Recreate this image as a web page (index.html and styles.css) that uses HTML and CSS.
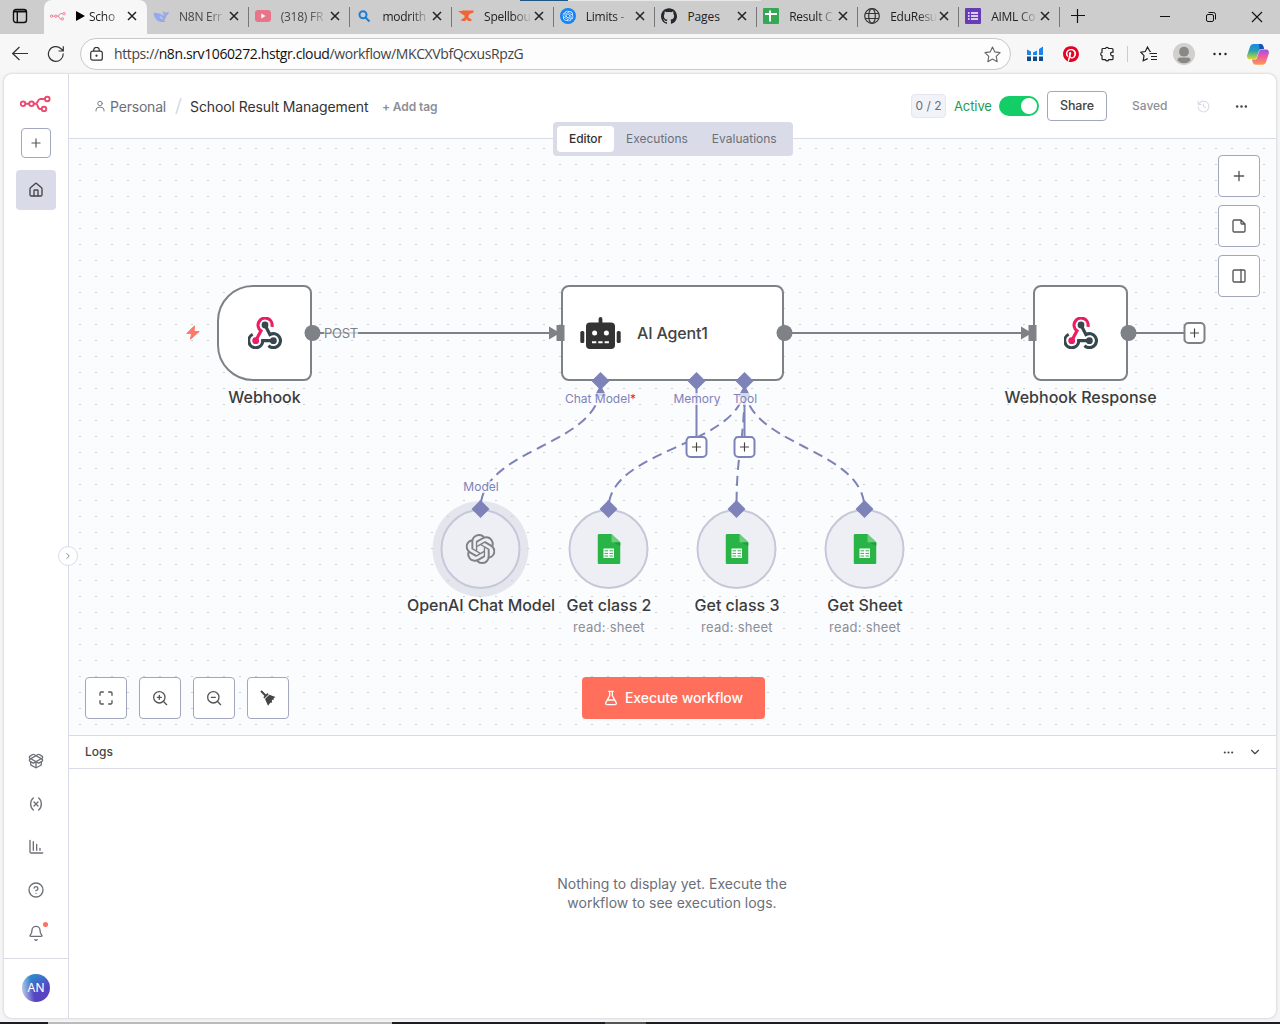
FILE: index.html
```html
<!DOCTYPE html>
<html lang="en">
<head>
<meta charset="utf-8">
<title>School Result Management</title>
<link rel="stylesheet" href="styles.css">
</head>
<body>
<svg width="0" height="0" class="defs" aria-hidden="true">
  <defs>
    <symbol id="n8n" viewBox="0 0 31 17"><g fill="none" stroke="currentColor" stroke-width="1.9"><circle cx="3" cy="8.8" r="2.3"/><circle cx="11.5" cy="8.8" r="2.3"/><circle cx="27.3" cy="4" r="2.3"/><circle cx="24" cy="14" r="2.3"/><path d="M5.3 8.8h3.9M13.8 8.8h2c2 0 1.400-4.700 4.400-4.800h4.800M15.800 8.800c2.500 0 1.600 5.200 4.200 5.200h1.700"/></g></symbol>
    <symbol id="close" viewBox="0 0 10 10"><path d="M1 1l8 8M9 1l-8 8" stroke="currentColor" stroke-width="1.500"/></symbol>
    <symbol id="openai" viewBox="0 0 24 24"><path fill="currentColor" d="M22.2819 9.8211a5.9847 5.9847 0 0 0-.5157-4.9108 6.0462 6.0462 0 0 0-6.5098-2.9A6.0651 6.0651 0 0 0 4.9807 4.1818a5.9847 5.9847 0 0 0-3.9977 2.9 6.0462 6.0462 0 0 0 .7427 7.0966 5.98 5.98 0 0 0 .511 4.9107 6.051 6.051 0 0 0 6.5146 2.9001A5.9847 5.9847 0 0 0 13.2599 24a6.0557 6.0557 0 0 0 5.7718-4.2058 5.9894 5.9894 0 0 0 3.9977-2.9001 6.0557 6.0557 0 0 0-.7475-7.0729zm-9.022 12.6081a4.4755 4.4755 0 0 1-2.8764-1.0408l.1419-.0804 4.7783-2.7582a.7948.7948 0 0 0 .3927-.6813v-6.7369l2.02 1.1686a.071.071 0 0 1 .038.052v5.5826a4.504 4.504 0 0 1-4.4945 4.4944zm-9.6607-4.1254a4.4708 4.4708 0 0 1-.5346-3.0137l.142.0852 4.783 2.7582a.7712.7712 0 0 0 .7806 0l5.8428-3.3685v2.3324a.0804.0804 0 0 1-.0332.0615L9.74 19.9502a4.4992 4.4992 0 0 1-6.1408-1.6464zM2.3408 7.8956a4.485 4.485 0 0 1 2.3655-1.9728V11.6a.7664.7664 0 0 0 .3879.6765l5.8144 3.3543-2.0201 1.1685a.0757.0757 0 0 1-.071 0l-4.8303-2.7865A4.504 4.504 0 0 1 2.3408 7.872zm16.5963 3.8558L13.1038 8.364 15.1192 7.2a.0757.0757 0 0 1 .071 0l4.8303 2.7913a4.4944 4.4944 0 0 1-.6765 8.1042v-5.6772a.79.79 0 0 0-.407-.667zm2.0107-3.0231l-.142-.0852-4.7735-2.7818a.7759.7759 0 0 0-.7854 0L9.409 9.2297V6.8974a.0662.0662 0 0 1 .0284-.0615l4.8303-2.7866a4.4992 4.4992 0 0 1 6.6802 4.66zM8.3065 12.863l-2.02-1.1638a.0804.0804 0 0 1-.038-.0567V6.0742a4.4992 4.4992 0 0 1 7.3757-3.4537l-.142.0805L8.704 5.459a.7948.7948 0 0 0-.3927.6813zm1.0976-2.3654l2.602-1.4998 2.6069 1.4998v2.9994l-2.5974 1.4997-2.6067-1.4997Z"/></symbol>
    <symbol id="webhook" viewBox="0 0 34 32"><g fill="none" stroke-width="3.200"><path stroke="#37474f" d="M4.700 17.400A7 7 0 1 0 14.700 23.700H25.400M17 8L21.900 17.600A7 7 0 1 1 20.500 28.600"/><path stroke="#e91e63" d="M23.900 9.800A7 7 0 1 0 13 13.800L7.700 23.700"/></g><circle cx="17" cy="8" r="3.400" fill="#37474f"/><circle cx="25.400" cy="23.700" r="3.400" fill="#37474f"/><circle cx="7.700" cy="23.700" r="3.400" fill="#e91e63"/></symbol>
    <symbol id="sheets" viewBox="0 0 23 30"><path fill="#28b446" d="M1.500 0H14l9 8.500v20a1.500 1.500 0 0 1-1.500 1.500h-20A1.500 1.500 0 0 1 0 28.500v-27A1.500 1.500 0 0 1 1.500 0z"/><path fill="#6ace7c" d="M14 0l9 8.500h-7.500A1.500 1.500 0 0 1 14 7z"/><path fill="#219b38" d="M16 8.500h7V12z"/><path fill="#fff" d="M6 14.500h10.500v9.500H6z"/><path stroke="#28b446" stroke-width="1" d="M7 16.800h3.600M12 16.800h3.600M7 19.400h3.600M12 19.400h3.600M7 22h3.600M12 22h3.600" /></symbol>
    <symbol id="plus" viewBox="0 0 24 24"><path d="M5 12h14M12 5v14"/></symbol>
    <symbol id="dots" viewBox="0 0 24 24"><g fill="currentColor" stroke="none"><circle cx="4" cy="12" r="2.300"/><circle cx="12" cy="12" r="2.300"/><circle cx="20" cy="12" r="2.300"/></g></symbol>
  </defs>
</svg>

<div class="browser">
  <div class="tabstrip">
    <div class="workspaces"><svg width="16" height="16" viewBox="0 0 16 16" fill="none" stroke="#111" stroke-width="1.400"><rect x="1.500" y="1.500" width="13" height="13" rx="2.500"/><path d="M1.500 3.500h13" stroke-width="2"/><path d="M5.300 4v10"/></svg></div>
    <div class="tab active"><svg class="fav faded" width="17" height="16"><use href="#n8n"/></svg><span class="name"><svg class="play" width="9" height="10" viewBox="0 0 9 10"><path d="M0 0l9 5-9 5z"/></svg>Scho</span><svg class="x"><use href="#close"/></svg></div>
    <div class="tab"><svg class="fav" viewBox="0 0 16 16"><path fill="#98a8ee" d="M1 4.500c2 .8 3.500.5 5.500 1 1.800.5 3 2 4.300 2.300C10.500 6 9.300 4 10 2.500c.6 1.800 1.500 2.200 3 2.200 1.200 0 1.800-.8 2.800-1.200-.1 2-1 3.700-2.600 4.300-.1 2.200-1 3.500-2.200 4.500l1.600 1.200c-3 1-6.500.8-8.800-1.500C1.500 10 .3 7 1 4.500z"/><path fill="#cdcdcd" d="M6.500 8c1.700.4 3 1.800 3.600 3.300-1.900-.2-3.200-1.400-3.600-3.300z"/></svg><span class="name dim">N8N Err</span><svg class="x"><use href="#close"/></svg></div>
    <div class="tab"><svg class="fav" viewBox="0 0 16 16"><rect y="2" width="16" height="12" rx="3" fill="#e8748a"/><path fill="#fff" d="M6.300 5.500l4.200 2.500-4.200 2.500z"/></svg><span class="name dim">(318) FR</span><svg class="x"><use href="#close"/></svg></div>
    <div class="tab"><svg class="fav" viewBox="0 0 16 16" fill="none" stroke="#1a7fd4" stroke-width="2"><circle cx="7" cy="6.700" r="3.500"/><path d="M9.500 9.500l4 4"/></svg><span class="name">modrith</span><svg class="x"><use href="#close"/></svg></div>
    <div class="tab"><svg class="fav" viewBox="0 0 16 16"><path fill="#f16436" d="M0 3h4v-.5h11.500v2l-4 1.500-1 2v1.500l3 2V13H9.800v-1.200H7.500V13H3.500v-1.500L6.500 9.500V7.500L4 6z"/></svg><span class="name">Spellbou</span><svg class="x"><use href="#close"/></svg></div>
    <div class="tab"><svg class="fav" viewBox="0 0 16 16"><circle cx="8" cy="8" r="8" fill="#1682f3"/><svg class="limits-mark" x="2.500" y="2.500" width="11" height="11" viewBox="0 0 24 24"><use href="#openai"/></svg></svg><span class="name">Limits -</span><svg class="x"><use href="#close"/></svg></div>
    <div class="tab"><svg class="fav" viewBox="0 0 24 24"><path fill="#24292f" d="M12 .297c-6.63 0-12 5.373-12 12 0 5.303 3.438 9.8 8.205 11.385.6.113.82-.258.82-.577 0-.285-.01-1.04-.015-2.04-3.338.724-4.042-1.61-4.042-1.61C4.422 18.07 3.633 17.7 3.633 17.7c-1.087-.744.084-.729.084-.729 1.205.084 1.838 1.236 1.838 1.236 1.07 1.835 2.809 1.305 3.495.998.108-.776.417-1.305.76-1.605-2.665-.3-5.466-1.332-5.466-5.93 0-1.31.465-2.38 1.235-3.22-.135-.303-.54-1.523.105-3.176 0 0 1.005-.322 3.3 1.23.96-.267 1.98-.399 3-.405 1.02.006 2.04.138 3 .405 2.28-1.552 3.285-1.23 3.285-1.23.645 1.653.24 2.873.12 3.176.765.84 1.23 1.91 1.23 3.22 0 4.61-2.805 5.625-5.475 5.92.42.36.81 1.096.81 2.22 0 1.606-.015 2.896-.015 3.286 0 .315.21.69.825.57C20.565 22.092 24 17.592 24 12.297c0-6.627-5.373-12-12-12"/></svg><span class="name full">Pages</span><svg class="x"><use href="#close"/></svg></div>
    <div class="tab"><svg class="fav" viewBox="0 0 16 16"><rect width="16" height="16" rx="1" fill="#34a853"/><path stroke="#fff" stroke-width="2" d="M2 6h12M7 2.500v11"/></svg><span class="name">Result C</span><svg class="x"><use href="#close"/></svg></div>
    <div class="tab"><svg class="fav" viewBox="0 0 16 16" fill="none" stroke="#333" stroke-width="1.200"><circle cx="8" cy="8" r="7.300"/><ellipse cx="8" cy="8" rx="3.300" ry="7.300"/><path d="M1.200 5.500h13.600M1.200 10.500h13.600"/></svg><span class="name">EduResu</span><svg class="x"><use href="#close"/></svg></div>
    <div class="tab"><svg class="fav" viewBox="0 0 16 16"><rect width="16" height="16" rx="1" fill="#673ab7"/><path stroke="#fff" stroke-width="1.600" d="M3 5h1.600M3 8h1.600M3 11h1.600M6 5h7M6 8h7M6 11h7"/></svg><span class="name">AIML Co</span><svg class="x"><use href="#close"/></svg></div>
    <svg class="newtab" width="14" height="14" viewBox="0 0 14 14" stroke="#111" stroke-width="1.200"><path d="M0 6.500h14M6.500 0v14"/></svg>
    <div class="window-buttons">
      <svg width="46" height="34" viewBox="0 0 46 34" fill="none" stroke="#111"><path d="M18 16.500h10"/></svg>
      <svg width="46" height="34" viewBox="0 0 46 34" fill="none" stroke="#111"><rect x="18.500" y="14.500" width="7" height="7" rx="1.500"/><path d="M20.500 12.500h5a2 2 0 0 1 2 2v5"/></svg>
      <svg width="46" height="34" viewBox="0 0 46 34" fill="none" stroke="#111" stroke-width="1.100"><path d="M18 12l10 10M28 12L18 22"/></svg>
    </div>
  </div>

  <div class="toolbar">
    <div class="nav">
      <svg width="16" height="16" viewBox="0 0 16 16" fill="none" stroke="#333" stroke-width="1.200"><path d="M16 7.500H.8M7.500 1L.7 7.500 7.500 14"/></svg>
      <svg width="18" height="18" viewBox="0 0 18 18" fill="none" stroke="#333" stroke-width="1.200"><path d="M16.200 8.500A7.400 7.400 0 1 1 14 3.700l2 2M16.300 1.200v4.800h-4.800"/></svg>
    </div>
    <div class="omnibox">
      <svg width="13" height="15" viewBox="0 0 13 15" fill="none" stroke="#333" stroke-width="1.200"><rect x=".7" y="4.200" width="11.600" height="9" rx="2"/><path d="M3.700 4V3.100a2.800 2.800 0 0 1 5.600 0V4"/><circle cx="6.500" cy="8.700" r=".5" fill="#333"/></svg>
      <span class="url">https://<b>n8n.srv1060272.hstgr.cloud</b>/workflow/MKCXVbfQcxusRpzG</span>
      <svg width="17" height="17" viewBox="0 0 17 17" fill="none" stroke="#666" stroke-width="1.100"><path d="M8.500 1l2.300 4.900 5.300.7-3.900 3.700 1 5.400-4.700-2.600-4.700 2.600 1-5.400L.9 6.600l5.300-.7z" stroke-linejoin="round"/></svg>
    </div>
    <div class="tools">
      <span><svg width="16" height="16" viewBox="0 0 16 16"><path fill="#1a84f0" d="M0 3.500l4 2V9H0zM6 6.500l4-2V9H6zM12 3l4-2.500V9h-4z"/><path fill="#124b84" d="M0 10.500h4V15H0zM6 10.500h4V15H6zM12 10.500h4V15h-4z"/></svg></span>
      <span><svg width="16" height="16" viewBox="0 0 24 24"><circle cx="12" cy="12" r="11" fill="#fff"/><path fill="#e60023" d="M12.017 0C5.396 0 .029 5.367.029 11.987c0 5.079 3.158 9.417 7.618 11.162-.105-.949-.199-2.403.041-3.439.219-.937 1.406-5.957 1.406-5.957s-.359-.72-.359-1.781c0-1.663.967-2.911 2.168-2.911 1.024 0 1.518.769 1.518 1.688 0 1.029-.653 2.567-.992 3.992-.285 1.193.6 2.165 1.775 2.165 2.128 0 3.768-2.245 3.768-5.487 0-2.861-2.063-4.869-5.008-4.869-3.41 0-5.409 2.562-5.409 5.199 0 1.033.394 2.143.889 2.741.099.12.112.225.085.345-.09.375-.293 1.199-.334 1.363-.053.225-.172.271-.401.165-1.495-.69-2.433-2.878-2.433-4.646 0-3.776 2.748-7.252 7.92-7.252 4.158 0 7.392 2.967 7.392 6.923 0 4.135-2.607 7.462-6.233 7.462-1.214 0-2.354-.629-2.758-1.379l-.749 2.848c-.269 1.045-1.004 2.352-1.498 3.146 1.123.345 2.306.535 3.55.535 6.607 0 11.985-5.365 11.985-11.987C23.97 5.39 18.592.026 11.985.026L12.017 0z"/></svg></span>
      <span><svg width="16" height="16" viewBox="0 0 16 16" fill="none" stroke="#222" stroke-width="1.200"><path d="M4 2.500h2.400a1.700 1.700 0 0 1 3.200 0H13a1 1 0 0 1 1 1V6.200c-3.200-.8-3.200 4.300 0 3.500v3a1 1 0 0 1-1 1H9.800a1.800 1.800 0 0 1-3.400 0H4a1 1 0 0 1-1-1V9.800a1.900 1.900 0 0 1 0-3.600V3.500a1 1 0 0 1 1-1z"/></svg></span>
      <i></i>
      <span><svg width="17" height="17" viewBox="0 0 17 17" fill="none" stroke="#222" stroke-width="1.200"><path d="M11 5.500l-1.200-.2L7.500 1 5.300 5.500.8 6.200 4 9.600l-.8 5.200 4.500-2.200M9.500 7.500H17M11 10.500h6M11 13.500h6"/></svg></span>
      <span><svg width="22" height="22" viewBox="0 0 22 22"><circle cx="11" cy="11" r="11" fill="#d2d0ce"/><circle cx="11" cy="8.700" r="4.900" fill="#8a8886"/><path fill="#8a8886" d="M4.500 17.500q0-3 3-3h7q3 0 3 3a9 9 0 0 1-13 0z"/></svg></span>
      <span><svg width="14" height="16" viewBox="0 0 14 16"><g fill="#222"><circle cx="1.500" cy="8" r="1.200"/><circle cx="7" cy="8" r="1.200"/><circle cx="12.500" cy="8" r="1.200"/></g></svg></span>
      <span class="copilot"><svg width="22" height="21" viewBox="0 0 22 21"><defs><linearGradient id="c1" x2="0" y2="1"><stop stop-color="#1a8be8"/><stop offset=".45" stop-color="#2aa0b0"/><stop offset="1" stop-color="#d8dc2c"/></linearGradient><linearGradient id="c2" x2="0" y2="1"><stop stop-color="#a050e8"/><stop offset=".5" stop-color="#f0609a"/><stop offset="1" stop-color="#ff9a4a"/></linearGradient></defs><path fill="url(#c1)" d="M6.500 0h7a3 3 0 0 1 2.800 2.200L17 5h-2.500c-1.500 0-2.300.8-2.700 2.200L10 13c-.5 1.500-1.300 2.200-3 2.200H2.500C.5 15.200-.3 13 .2 11L3 2.800C3.600 1 4.800 0 6.500 0z"/><path fill="url(#c2)" d="M15 5.500h4.500c2 0 2.800 2.200 2.300 4L19 18c-.6 1.800-1.800 2.700-3.500 2.700h-7a3 3 0 0 1-2.800-2.200L5 15.600h2.500c1.500 0 2.300-.8 2.700-2.200L12 7.700c.5-1.500 1.300-2.200 3-2.200z"/><path fill="#1454b8" d="M12 0h1.500a3 3 0 0 1 2.800 2.200L17 5h-2.500c-1 0-1.500.2-2 .8z"/></svg></span>
    </div>
  </div>
</div>

<div class="app">
  <aside class="sidebar">
    <svg class="logo" width="31" height="17"><use href="#n8n"/></svg>
    <button class="add"><svg class="ic" width="14" height="14"><use href="#plus"/></svg></button>
    <div class="home"><svg class="ic" width="16" height="16" viewBox="0 0 24 24"><path d="M15 21v-8a1 1 0 0 0-1-1h-4a1 1 0 0 0-1 1v8"/><path d="M3 10a2 2 0 0 1 .709-1.528l7-6a2 2 0 0 1 2.582 0l7 6A2 2 0 0 1 21 10v9a2 2 0 0 1-2 2H5a2 2 0 0 1-2-2z"/></svg></div>
    <nav class="links">
      <svg class="ic" width="16" height="16" viewBox="0 0 24 24"><path d="M12 22v-9M15.170 2.210a1.670 1.670 0 0 1 1.630 0L21 4.570a1.930 1.930 0 0 1 0 3.360L8.820 14.790a1.655 1.655 0 0 1-1.640 0L3 12.430a1.930 1.930 0 0 1 0-3.360z"/><path d="M20 13v3.870a2.060 2.060 0 0 1-1.110 1.830l-6 3.080a1.930 1.930 0 0 1-1.780 0l-6-3.080A2.060 2.060 0 0 1 4 16.870V13"/><path d="M21 12.430a1.930 1.930 0 0 0 0-3.360L8.830 2.200a1.640 1.640 0 0 0-1.630 0L3 4.570a1.930 1.930 0 0 0 0 3.360l12.180 6.860a1.636 1.636 0 0 0 1.630 0z"/></svg>
      <svg class="ic" width="16" height="16" viewBox="0 0 24 24"><path d="M8 21s-4-3-4-9 4-9 4-9M16 3s4 3 4 9-4 9-4 9M15 9l-6 6M9 9l6 6"/></svg>
      <svg class="ic" width="16" height="16" viewBox="0 0 24 24"><path d="M3 2v17a2 2 0 0 0 2 2h17M8 17V4M13 17V8M18 17v-3"/></svg>
      <svg class="ic" width="16" height="16" viewBox="0 0 24 24"><circle cx="12" cy="12" r="10.500"/><path d="M9.090 9a3 3 0 0 1 5.830 1c0 2-3 3-3 3M12 17h.01"/></svg>
      <div class="bell"><svg class="ic" width="16" height="16" viewBox="0 0 24 24"><path d="M10.268 22a2 2 0 0 0 3.464 0M3.262 15.326A1 1 0 0 0 4 17h16a1 1 0 0 0 .740-1.673C19.410 13.956 18 12.499 18 8A6 6 0 0 0 6 8c0 4.499-1.411 5.956-2.738 7.326"/></svg></div>
    </nav>
    <div class="user"><span class="avatar">AN</span></div>
    <div class="expand"><svg class="ic" width="10" height="10" viewBox="0 0 24 24"><path d="M9 18l6-6-6-6"/></svg></div>
  </aside>

  <main class="main">
    <header class="header">
      <svg class="ic person" width="12" height="12" viewBox="0 0 24 24"><circle cx="12" cy="7" r="4.500"/><path d="M4 22v-2a6 6 0 0 1 6-5.500h4a6 6 0 0 1 6 5.500v2"/></svg>
      <span class="project">Personal</span>
      <svg class="slash" width="7" height="18" viewBox="0 0 7 18"><path d="M6 1L1 17" stroke="#d9dce8" stroke-width="1.700"/></svg>
      <span class="title">School Result Management</span>
      <span class="addtag">+ Add tag</span>
      <span class="chip">0 / 2</span>
      <span class="status">Active</span>
      <span class="toggle"></span>
      <button class="share">Share</button>
      <span class="saved">Saved</span>
      <svg class="ic history" width="13" height="13" viewBox="0 0 24 24"><path d="M2 12a10 10 0 1 0 10-10 10 10 0 0 0-7.500 3.500L2 8M2 2v6h6M12 7v5l4 2"/></svg>
      <svg class="more" width="13" height="13"><use href="#dots"/></svg>
      <div class="switch"><span class="on">Editor</span><span>Executions</span><span>Evaluations</span></div>
    </header>

    <section class="canvas">
      <svg class="edges" viewBox="69 139 1207 596">
        <defs><pattern id="grid" x="79" y="148" width="16" height="16" patternUnits="userSpaceOnUse"><rect width="2" height="1" fill="#cfd0d4"/></pattern></defs>
        <rect x="69" y="139" width="1207" height="596" fill="url(#grid)"/>
        <g stroke="#7e8186" stroke-width="2"><path d="M312 333H550M785 333h238M1128 333h56"/></g>
        <g class="dash"><path d="M480.500 509C480.500 447 600.500 447 600.500 385"/><path d="M608.500 509C608.500 447 744.500 447 744.500 385"/><path d="M736.500 509C736.500 447 744.500 447 744.500 385"/><path d="M864.500 509C864.500 447 744.500 447 744.500 385"/></g>
        <path d="M696.500 381v55M744.500 381v55" stroke="#7d82b8" stroke-width="2"/>
        <g fill="#7e8186"><path d="M549 326.500l11 6.500-11 6.500zM1021 326.500l11 6.500-11 6.500z"/></g>
        <g fill="#7d82b8"><path d="M594.500 396l6-11 6 11zM738 397l6.500-12 6.500 12z"/></g>
      </svg>

      <div class="viewport">
        <svg class="bolt" width="14" height="15" viewBox="0 0 14 15"><path fill="#ff7a66" stroke="#ff7a66" stroke-linejoin="round" d="M8.500.8L.8 8.500h4.700L4.500 14.200l8.700-7.700H8z"/></svg>
        <div class="node trigger"><svg width="34" height="32"><use href="#webhook"/></svg></div>
        <div class="node agent">
          <svg width="41" height="32" viewBox="0 0 41 32"><g fill="#333"><rect x="18.600" width="3.800" height="8" rx="1.900"/><rect x="6" y="5.500" width="29" height="26.500" rx="4"/><rect x=".3" y="14" width="4" height="12" rx="1.500"/><rect x="36.700" y="14" width="4" height="12" rx="1.500"/></g><g fill="#fff"><circle cx="14.600" cy="16" r="2.500"/><circle cx="26.400" cy="16" r="2.500"/><path d="M12 24.200h4.300v2H12zM18.300 24.200h4.300v2h-4.300zM24.600 24.200h4.300v2h-4.300z"/></g></svg>
          <span>AI Agent1</span>
        </div>
        <div class="node response"><svg width="34" height="32"><use href="#webhook"/></svg></div>
        <div class="disc d1 selected"><svg width="30" height="30"><use href="#openai"/></svg></div>
        <div class="disc d2"><svg width="23" height="30"><use href="#sheets"/></svg></div>
        <div class="disc d3"><svg width="23" height="30"><use href="#sheets"/></svg></div>
        <div class="disc d4"><svg width="23" height="30"><use href="#sheets"/></svg></div>

        <span class="label l-webhook">Webhook</span>
        <span class="label l-response">Webhook Response</span>
        <span class="label l-openai">OpenAI Chat Model</span>
        <span class="label l-c2">Get class 2<small>read: sheet</small></span>
        <span class="label l-c3">Get class 3<small>read: sheet</small></span>
        <span class="label l-sheet">Get Sheet<small>read: sheet</small></span>

        <span class="port p-post">POST</span>
        <span class="port p-chat">Chat Model<em>*</em></span>
        <span class="port p-memory">Memory</span>
        <span class="port p-tool">Tool</span>
        <span class="port p-model">Model</span>

        <div class="plus plus-out"><svg width="14" height="14" class="ic"><use href="#plus"/></svg></div>
        <div class="plus plus-memory"><svg width="14" height="14" class="ic"><use href="#plus"/></svg></div>
        <div class="plus plus-tool"><svg width="14" height="14" class="ic"><use href="#plus"/></svg></div>
      </div>

      <svg class="handles" viewBox="69 139 1207 596">
        <g fill="#7e8186"><circle cx="312.500" cy="333" r="8"/><circle cx="784.500" cy="333" r="8"/><circle cx="1128.500" cy="333" r="8"/><path d="M556.500 325h8v16h-8zM1028.500 325h8v16h-8z"/></g>
        <g fill="#7d82b8"><path d="M600.500 372l9 9-9 9-9-9zM696.500 372l9 9-9 9-9-9zM744.500 372l9 9-9 9-9-9zM480.500 500l9 9-9 9-9-9zM608.500 500l9 9-9 9-9-9zM736.500 500l9 9-9 9-9-9zM864.500 500l9 9-9 9-9-9z"/></g>
      </svg>

      <div class="side-tools">
        <button class="sq"><svg class="ic" width="16" height="16"><use href="#plus"/></svg></button>
        <button class="sq"><svg class="ic" width="16" height="16" viewBox="0 0 24 24"><path d="M15 3H5a2 2 0 0 0-2 2v14a2 2 0 0 0 2 2h14a2 2 0 0 0 2-2V9zM15 3v5a1 1 0 0 0 1 1h5"/></svg></button>
        <button class="sq"><svg class="ic" width="16" height="16" viewBox="0 0 24 24"><rect x="3" y="3" width="18" height="18" rx="2"/><path d="M15 3v18"/></svg></button>
      </div>

      <div class="bottom-tools">
        <button class="sq"><svg class="ic" width="16" height="16" viewBox="0 0 24 24"><path d="M8 3H5a2 2 0 0 0-2 2v3M21 8V5a2 2 0 0 0-2-2h-3M3 16v3a2 2 0 0 0 2 2h3M16 21h3a2 2 0 0 0 2-2v-3"/></svg></button>
        <button class="sq"><svg class="ic" width="16" height="16" viewBox="0 0 24 24"><circle cx="11" cy="11" r="8.500"/><path d="M22 22l-5-5M11 8v6M8 11h6"/></svg></button>
        <button class="sq"><svg class="ic" width="16" height="16" viewBox="0 0 24 24"><circle cx="11" cy="11" r="8.500"/><path d="M22 22l-5-5M8 11h6"/></svg></button>
        <button class="sq"><svg width="16" height="16" viewBox="0 0 16 16"><path d="M1 1l5 5" stroke="#444" stroke-width="2"/><path fill="#444" d="M3.300 7.300L7.500 3l1.200 1.200-4.200 4.200zM5 9l4.300-4.300 6.200 2.200-2 1.300.5 1.300-2.200.5.300 2.500-1.800.2L8 15.800z"/></svg></button>
      </div>
      <button class="execute"><svg class="ic" width="16" height="16" viewBox="0 0 24 24"><path d="M14 2v6a2 2 0 0 0 .245.960l5.510 10.080A2 2 0 0 1 18 22H6a2 2 0 0 1-1.755-2.960l5.510-10.080A2 2 0 0 0 10 8V2M6.453 15h11.094M8.500 2h7"/></svg><span>Execute workflow</span></button>
    </section>

    <section class="logs">
      <div class="logs-head"><span>Logs</span><svg class="more" width="11" height="11"><use href="#dots"/></svg><svg class="ic" width="14" height="14" viewBox="0 0 24 24"><path d="M6 9l6 6 6-6"/></svg></div>
      <p>Nothing to display yet. Execute the<br>workflow to see execution logs.</p>
    </section>
  </main>
</div>
<div class="taskbar"></div>
</body>
</html>
```
FILE: styles.css
```css
* { box-sizing: border-box; }
body { margin: 0; width: 1280px; height: 1024px; overflow: hidden; display: flex; flex-direction: column; background: #f5f5f5; font-family: Inter, sans-serif; color: #444; }
.defs { position: absolute; }
svg { display: block; flex: none; }
button { font: inherit; padding: 0; margin: 0; display: flex; align-items: center; justify-content: center; }
.ic { fill: none; stroke: currentColor; stroke-width: 2; stroke-linecap: round; stroke-linejoin: round; }

/* browser chrome */
.browser { font-family: "Open Sans", sans-serif; }
.tabstrip { height: 34px; display: flex; background: linear-gradient(90deg, transparent 520px, #1f5582 520px 568px, #e8e8e8 568px 761px, transparent 761px) top / 100% 1px no-repeat #cdcdcd; }
.workspaces { width: 44px; padding: 8px 0 0 12px; background: #cdcdcd; }
.tab { flex: none; width: 101px; height: 34px; display: flex; align-items: center; padding: 0 10px 2px 6px; position: relative; font-size: 12px; color: #222; }
.tab:nth-child(-n+8) { width: 101.700px; }
.tab.active { width: 103px; background: #f7f7f7; border-radius: 8px 8px 0 0; }
.tab:not(.active)::after { content: ""; position: absolute; right: 0; top: 7px; height: 20px; width: 1px; background: #777; }
.fav { width: 16px; height: 16px; }
.faded { opacity: .8; color: #ee5b7a; }
.limits-mark { color: #fff; }
.name { flex: 1; display: flex; align-items: center; gap: 4px; margin: 0 2px 0 10px; white-space: nowrap; letter-spacing: -.25px; -webkit-mask-image: linear-gradient(90deg, #000 60%, transparent 100%); mask-image: linear-gradient(90deg, #000 60%, transparent 100%); }
.name.full { -webkit-mask-image: none; mask-image: none; letter-spacing: -.1px; }
.name.dim { opacity: .8; }
.x { width: 10px; height: 10px; color: #222; }
.newtab { margin: 9px 0 0 11px; }
.window-buttons { display: flex; margin-left: auto; }
.toolbar { height: 40px; display: flex; align-items: center; background: #f7f7f7; }
.nav { width: 80px; padding-left: 12px; display: flex; align-items: center; gap: 19px; }
.omnibox { width: 931px; height: 32px; border: 1px solid #c8c8c8; border-radius: 16px; background: #fdfdfd; display: flex; align-items: center; padding: 0 9px; }
.url { flex: 1; margin-left: 11px; padding-bottom: 1px; font-size: 14px; letter-spacing: -.39px; color: #444; }
.url b { font-weight: 400; color: #111; }
.tools { display: flex; align-items: center; margin-left: 6px; }
.tools span { width: 36px; display: flex; justify-content: center; }
.tools i { width: 1px; height: 16px; background: #ccc; margin: 0 2px; }
.tools .copilot { width: 40px; }

/* app shell */
.app { height: 944px; margin: 0 4px; display: flex; background: #fff; border-radius: 8px; box-shadow: 0 0 3px rgba(0, 0, 0, .22); }
.sidebar { width: 65px; border-right: 1px solid #d9dce8; display: flex; flex-direction: column; align-items: center; position: relative; color: #6c6f78; }
.logo { color: #ea4b71; margin: 21px 2px 0 0; }
.add { width: 30px; height: 30px; margin-top: 16px; background: #fff; border: 1px solid #a2a7bb; border-radius: 4px; color: #555; }
.home { width: 40px; height: 40px; margin-top: 12px; border-radius: 4px; background: #d9dce8; color: #444; display: flex; align-items: center; justify-content: center; }
.links { margin-top: auto; display: flex; flex-direction: column; gap: 27px; }
.bell { position: relative; }
.bell::after { content: ""; position: absolute; left: 15px; top: -3px; width: 5px; height: 5px; border-radius: 50%; background: #ff6f5c; }
.user { width: 100%; height: 60px; margin-top: 17px; padding-bottom: 2px; border-top: 1px solid #d9dce8; display: flex; align-items: center; justify-content: center; }
.avatar { width: 28px; height: 28px; border-radius: 50%; background: linear-gradient(80deg, #c7d3ea 2%, transparent 40%), linear-gradient(150deg, #2f86cc 20%, #5547c4 60%, #5b3fbc); color: #fff; font-size: 12px; display: flex; align-items: center; justify-content: center; }
.expand { position: absolute; left: 54px; top: 472px; width: 20px; height: 20px; border-radius: 50%; border: 1px solid #d9dce8; background: #fff; display: flex; align-items: center; justify-content: center; z-index: 3; }
.main { flex: 1; min-width: 0; display: flex; flex-direction: column; }

.header { height: 65px; border-bottom: 1px solid #d9dce8; display: flex; align-items: center; padding: 0 28px 0 25px; position: relative; }
.person { color: #7e8186; }
.project { font-size: 14px; letter-spacing: -.2px; color: #6c6f78; margin-left: 4px; }
.slash { margin: 0 8px 0 9px; }
.title { font-size: 14px; letter-spacing: -.1px; color: #333; }
.addtag { font-size: 12px; font-weight: 600; letter-spacing: -.08px; color: #8d8f96; margin-left: 13.500px; }
.chip { margin-left: auto; width: 35px; height: 24px; padding-bottom: 1px; border: 1px solid #e4e6f0; background: #f2f3f8; border-radius: 4px; font-size: 12px; display: flex; align-items: center; justify-content: center; color: #6c6f78; }
.status { width: 37px; margin-left: 8px; font-size: 13px; letter-spacing: -.1px; color: #1e9a55; }
.toggle { width: 40px; height: 20px; margin-left: 8px; border-radius: 10px; background: radial-gradient(circle at 30px 10px, #fff 7.500px, transparent 8.500px), #13ce66; }
.share { width: 60px; height: 30px; margin-left: 8px; padding-bottom: 1px; background: #fff; border: 1px solid #a2a7bb; border-radius: 4px; font-size: 12.500px; font-weight: 500; letter-spacing: -.1px; color: #444; }
.saved { margin-left: 25px; padding-bottom: 1px; font-size: 12px; font-weight: 500; color: #8d8f96; width: 37px; }
.history { color: #d9dce8; margin-left: 28px; }
.more { color: #444; margin-left: 25px; }
.switch { position: absolute; left: 484px; top: 48px; height: 34px; width: 240px; padding: 4px; display: flex; background: #d9dce8; border-radius: 4px; z-index: 2; font-size: 12px; color: #6c6f78; }
.switch span { padding: 0 12px 2px; display: flex; align-items: center; border-radius: 4px; }
.switch .on { background: #fff; color: #333; font-weight: 500; letter-spacing: -.1px; }

/* workflow canvas */
.canvas { height: 596px; position: relative; background: #fbfcfe; overflow: hidden; }
.edges, .handles { position: absolute; inset: 0; width: 1207px; height: 596px; }
.dash path { fill: none; stroke: #7d82b8; stroke-width: 2; stroke-linecap: square; stroke-dasharray: 8 8; stroke-dashoffset: 8; }
.viewport { position: absolute; left: -69px; top: -139px; width: 1280px; height: 1024px; }
.viewport > * { position: absolute; }
.bolt { left: 186px; top: 325px; }
.node { top: 285px; height: 96px; width: 96px; background: #fff; border: 2px solid #7e8186; border-radius: 8px; display: flex; align-items: center; justify-content: center; }
.trigger { left: 217px; width: 95px; border-radius: 36px 8px 8px 36px; }
.agent { left: 561px; width: 223px; justify-content: flex-start; padding-left: 17px; gap: 16px; font-size: 16px; font-weight: 500; letter-spacing: -.15px; }
.response { left: 1033px; width: 95px; }
.disc { top: 509px; width: 80px; height: 80px; border-radius: 50%; border: 2px solid #c4c8d8; background: #eeeff5; display: flex; align-items: center; justify-content: center; transform: translateX(.5px); color: #7e8186; }
.selected { box-shadow: 0 0 0 8px rgba(200, 204, 218, .45); }
.d1 { left: 440px; } .d2 { left: 568px; } .d3 { left: 696px; } .d4 { left: 824px; }
.label { transform: translateX(-50%); font-size: 16px; font-weight: 500; line-height: 20px; text-align: center; white-space: nowrap; color: #3c3c3c; }
.label small { display: block; margin-top: 3px; font-size: 13px; font-weight: 400; line-height: 18px; letter-spacing: .25px; color: #8d8f96; }
.l-webhook { left: 264.500px; top: 387px; } .l-response { left: 1080.500px; top: 387px; }
.l-openai { left: 481px; top: 595px; letter-spacing: -.05px; } .l-c2 { left: 609px; top: 595px; } .l-c3 { left: 737px; top: 595px; } .l-sheet { left: 865px; top: 595px; }
.port { transform: translateX(-50%); font-size: 12px; line-height: 12px; color: #7d82b8; white-space: nowrap; background: rgba(251, 252, 254, .7); }
.port em { font-style: normal; color: #ea1f30; }
.p-post { left: 341px; top: 327px; font-size: 13px; letter-spacing: -.3px; color: #7e8186; }
.p-chat { left: 600.500px; top: 393px; } .p-memory { left: 697px; top: 393px; } .p-tool { left: 745px; top: 393px; } .p-model { left: 481px; top: 481px; }
.plus { width: 22px; height: 22px; background: #fff; border: 2px solid #7d82b8; border-radius: 5px; display: flex; align-items: center; justify-content: center; color: #444; transform: translateX(-.5px); }
.plus-out { left: 1184px; top: 322px; border-color: #7e8186; } .plus-memory { left: 686px; top: 436px; } .plus-tool { left: 734px; top: 436px; }
.sq { width: 42px; height: 42px; background: #fff; border: 1px solid #a2a7bb; border-radius: 4px; color: #555; }
.side-tools { position: absolute; right: 16px; top: 16px; display: flex; flex-direction: column; gap: 8px; }
.bottom-tools { position: absolute; left: 16px; bottom: 16px; display: flex; gap: 12px; }
.execute { position: absolute; left: 512.500px; bottom: 16px; width: 183px; height: 42px; gap: 6px; border: 0; border-radius: 4px; background: #ff6f5c; color: #fff; font-size: 14px; font-weight: 500; letter-spacing: -.07px; }
.execute span { padding-bottom: 1px; }

.logs { flex: 1; border-top: 1px solid #d9dce8; display: flex; flex-direction: column; }
.logs-head { height: 33px; border-bottom: 1px solid #d9dce8; display: flex; align-items: center; padding: 0 14px 0 16px; font-size: 12px; font-weight: 500; }
.logs-head span { padding-bottom: 2px; }
.logs-head .more { margin: 0 14px 0 auto; }
.logs p { margin: auto 0; padding: 0 1px 1px 0; text-align: center; font-size: 14px; line-height: 19px; color: #6c6f78; }
.taskbar { height: 2px; margin-top: 4px; background: linear-gradient(90deg, #1c1c22 48px, #bbb 48px 392px, #1c1c22 392px 605px, #555 605px 646px, #1c1c22 646px); }
```
